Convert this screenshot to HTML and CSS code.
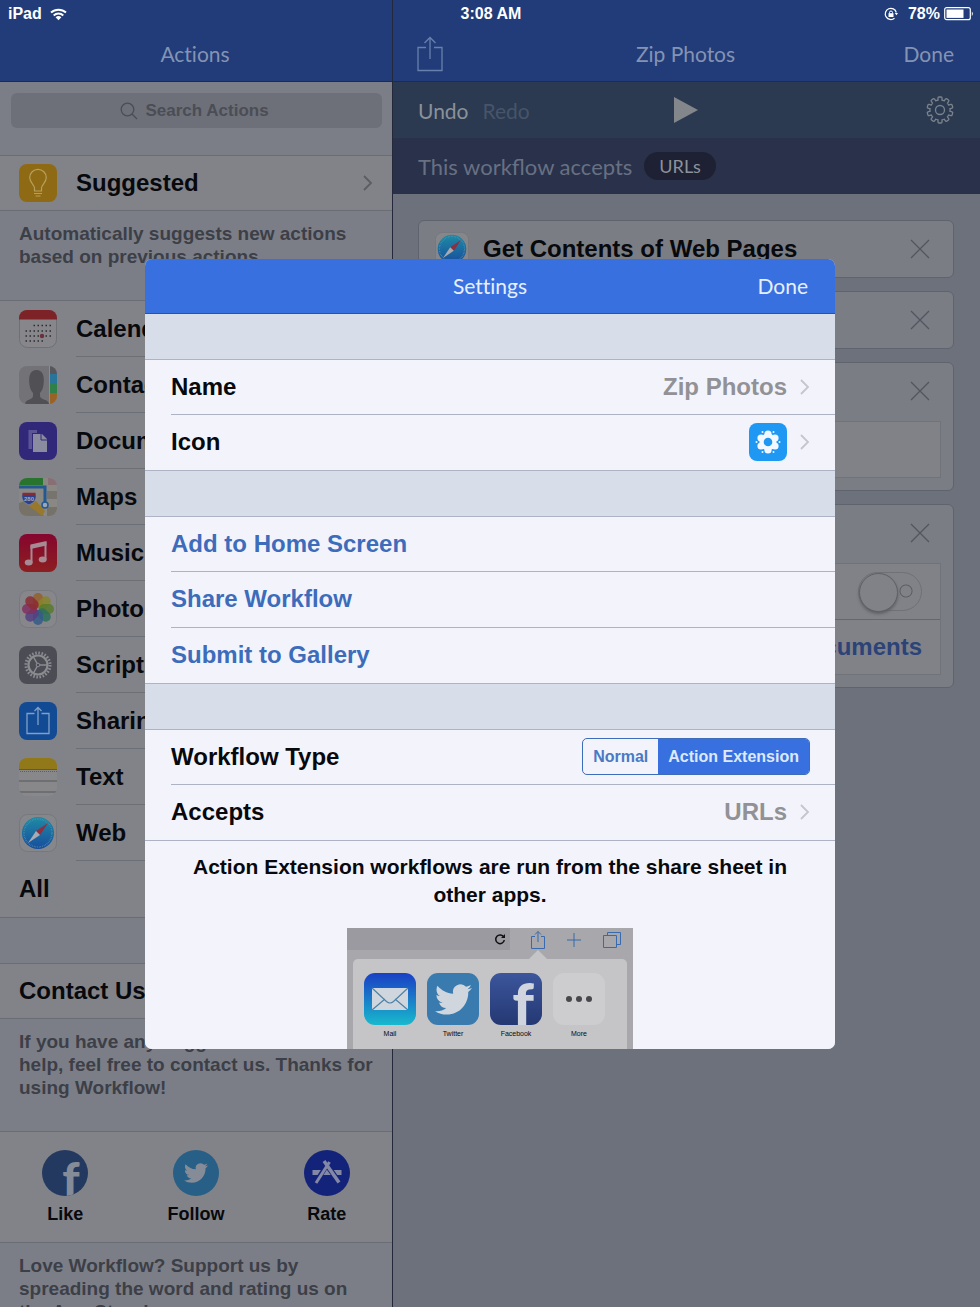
FILE: index.html
```html
<!DOCTYPE html>
<html lang="en">
<head>
    <meta charset="UTF-8">
    <meta name="viewport" content="width=device-width, initial-scale=1.0">
    <title>Workflow</title>
    <link rel="stylesheet" href="styles.css">
</head>
<body>
    <!-- Shared icon shapes -->
    <svg class="defs" width="0" height="0" aria-hidden="true">
        <defs>
            <linearGradient id="safariBlue" x1="0" y1="0" x2="0" y2="1">
                <stop offset="0" stop-color="#1f8ba5"/><stop offset="1" stop-color="#174d9c"/>
            </linearGradient>
            <linearGradient id="musicRed" x1="0" y1="0" x2="0" y2="1">
                <stop offset="0" stop-color="#85062f"/><stop offset="1" stop-color="#8c1f20"/>
            </linearGradient>
            <linearGradient id="mailBlue" x1="0" y1="0" x2="0" y2="1">
                <stop offset="0" stop-color="#1a3fc4"/><stop offset="1" stop-color="#18b9cd"/>
            </linearGradient>
            <linearGradient id="fbBlue" x1="0" y1="0" x2="0" y2="1">
                <stop offset="0" stop-color="#3c569c"/><stop offset="1" stop-color="#243873"/>
            </linearGradient>
            <clipPath id="tile"><rect width="38" height="38" rx="8"/></clipPath>
            <symbol id="bird" viewBox="0 0 24 24">
                <path d="M23.953 4.57a10 10 0 01-2.825.775 4.958 4.958 0 002.163-2.723c-.951.555-2.005.959-3.127 1.184a4.92 4.92 0 00-8.384 4.482C7.69 8.095 4.067 6.13 1.64 3.162a4.822 4.822 0 00-.666 2.475c0 1.71.87 3.213 2.188 4.096a4.904 4.904 0 01-2.228-.616v.06a4.923 4.923 0 003.946 4.827 4.996 4.996 0 01-2.212.085 4.936 4.936 0 004.604 3.417 9.867 9.867 0 01-6.102 2.105c-.39 0-.779-.023-1.17-.067a13.995 13.995 0 007.557 2.209c9.053 0 13.998-7.496 13.998-13.985 0-.21 0-.42-.015-.63A9.935 9.935 0 0024 4.59z"/>
            </symbol>
            <symbol id="chevron" viewBox="0 0 10 18">
                <path d="M1 2l7 7-7 7" fill="none" stroke="currentColor" stroke-width="1.800"/>
            </symbol>
            <symbol id="cross" viewBox="0 0 20 20">
                <path d="M1 1l18 18M19 1L1 19" fill="none" stroke="currentColor" stroke-width="1.3"/>
            </symbol>
            <symbol id="safari" viewBox="0 0 38 38">
                <rect x=".5" y=".5" width="37" height="37" rx="8" fill="#86878b" stroke="#77787d"/>
                <circle cx="19" cy="19" r="16" fill="url(#safariBlue)"/>
                <circle cx="19" cy="19" r="14" fill="none" stroke="#5f9cb5" stroke-width="1.4" stroke-dasharray=".5 1.2"/>
                <path d="M29 9L17 17l4 4z" fill="#8c3040"/>
                <path d="M9 29l8-12 4 4z" fill="#a9abb0"/>
            </symbol>
        </defs>
    </svg>

    <div class="status-bar">
        <div class="status-left">
            <span>iPad</span>
            <svg width="17" height="13" viewBox="0 0 17 13" fill="none" stroke="#fff" stroke-width="2">
                <path d="M1 4.6a11 11 0 0115 0M3.7 7.4a7 7 0 019.6 0"/>
                <path d="M5.6 9.2a4.3 4.3 0 015.8 0L8.500 12.200z" fill="#fff" stroke="none"/>
            </svg>
        </div>
        <div class="status-time">3:08 AM</div>
        <div class="status-right">
            <svg class="lock" width="14" height="14" viewBox="0 0 14 14" fill="none" stroke="#fff">
                <path d="M12.300 5.500A5.600 5.600 0 1010.500 11.200" stroke-width="1.2"/>
                <path d="M10.700 6l1.800 2.200L14 6z" fill="#fff" stroke="none"/>
                <rect x="4.500" y="6.200" width="5" height="3.800" fill="#fff" stroke="none"/>
                <path d="M5.500 6.500V5.500a1.500 1.500 0 013 0v1"/>
            </svg>
            <span>78%</span>
            <svg width="30" height="14" viewBox="0 0 30 14">
                <rect x=".7" y=".7" width="25.600" height="12" rx="2" fill="none" stroke="#fff" stroke-width="1.2"/>
                <rect x="2.500" y="2.500" width="17" height="8.400" fill="#fff"/>
                <path d="M27.800 4.500a3 3 0 010 4.500z" fill="#fff"/>
            </svg>
        </div>
    </div>

    <div class="panes">
        <section class="actions">
            <header class="nav nav-center">
                <h1>Actions</h1>
            </header>
            <div class="search-bar">
                <label class="search">
                    <svg width="18" height="18" viewBox="0 0 18 18" fill="none" stroke="#4b4d55" stroke-width="1.3">
                        <circle cx="7.500" cy="7.500" r="6.300"/><path d="M12 12l5 5"/>
                    </svg>
                    <input type="text" placeholder="Search Actions" aria-label="Search Actions">
                </label>
            </div>

            <ul class="list">
                <li class="row">
                    <svg class="tile" viewBox="0 0 38 38">
                        <rect width="38" height="38" rx="8" fill="#8f6a14"/>
                        <g fill="none" stroke="#b5a05c" stroke-width="1.2">
                            <path d="M15.500 27v-3c0-3-4.800-5.500-4.800-10.400a8.300 8.300 0 0116.600 0c0 4.900-4.800 7.400-4.800 10.400v3z"/>
                            <path d="M15 29.500h8M16.500 32h5"/>
                        </g>
                    </svg>
                    <span>Suggested</span>
                    <svg class="chevron" width="10" height="18"><use href="#chevron"/></svg>
                </li>
            </ul>
            <p class="note">Automatically suggests new actions based on previous actions.</p>

            <ul class="list inset">
                <li class="row">
                    <svg class="tile" viewBox="0 0 38 38">
                        <rect x=".5" y=".5" width="37" height="37" rx="8" fill="#86868b" stroke="#6f7076"/>
                        <path d="M0 9.500V8a8 8 0 018-8h22a8 8 0 018 8v1.500z" fill="#7d2328"/>
                        <g stroke="#2b2b31" stroke-width="1.5" stroke-dasharray="1.500 2.500">
                            <path d="M14.500 15.500h18M6.500 21h26M6.500 26h26M6.500 31h18"/>
                        </g>
                        <circle cx="23" cy="26" r="2.200" fill="#6d3039"/>
                    </svg>
                    <span>Calendar</span>
                </li>
                <li class="row">
                    <svg class="tile" viewBox="0 0 38 38">
                        <g clip-path="url(#tile)">
                            <rect width="38" height="38" fill="#737377"/>
                            <path d="M6 38c0-5 8-4 8-8v-3c-2-2-3-5-3.500-8C9 9 12 4 17.500 4S26 9 24.500 19c-.5 3-1.500 6-3.500 8v3c0 4 9 3 9 8z" fill="#515155"/>
                            <rect x="30" width="8" height="38" fill="#8d8d90"/>
                            <rect x="31" width="7" height="8" fill="#56575d"/>
                            <rect x="31" y="8" width="7" height="10" fill="#28749b"/>
                            <rect x="31" y="18" width="7" height="9" fill="#2f8149"/>
                            <rect x="31" y="27" width="7" height="11" fill="#9a6224"/>
                        </g>
                    </svg>
                    <span>Contacts</span>
                </li>
                <li class="row">
                    <svg class="tile" viewBox="0 0 38 38">
                        <rect width="38" height="38" rx="8" fill="#32287a"/>
                        <path d="M9.500 8H18v3h-5v16H9.500z" fill="#5b5595"/>
                        <path d="M14 12h9l5 5v13H14z" fill="#8b8ba0"/>
                        <path d="M22 12v6h6" fill="none" stroke="#32287a"/>
                    </svg>
                    <span>Documents</span>
                </li>
                <li class="row">
                    <svg class="tile" viewBox="0 0 38 38">
                        <g clip-path="url(#tile)">
                            <rect width="38" height="38" fill="#8a8882"/>
                            <rect width="24" height="7" fill="#28742f"/>
                            <rect x="29" width="9" height="7" fill="#886f76"/>
                            <rect x="28" y="13" width="10" height="8" fill="#77736e"/>
                            <path d="M0 38V25l12-4 13 17z" fill="#777267"/>
                            <path d="M10 28l7-5 9 10-3 5z" fill="#97782c"/>
                            <path d="M28 29h10v9H28z" fill="#767269"/>
                            <path d="M0 9h26v17" fill="none" stroke="#235891" stroke-width="3"/>
                            <circle cx="26" cy="27" r="3" fill="#9aa6b5" stroke="#235891" stroke-width="1.5"/>
                            <path d="M3 16c2-2 4 0 7-1 3 1 5-1 7 1 1 7-3 9-7 11-4-2-8-4-7-11z" fill="#29428b" stroke="#8b8b9a" stroke-width=".8"/>
                            <path d="M3.500 16h13" stroke="#832c38" stroke-width="2.500"/>
                            <text x="10" y="23" class="shield">280</text>
                        </g>
                    </svg>
                    <span>Maps</span>
                </li>
                <li class="row">
                    <svg class="tile" viewBox="0 0 38 38">
                        <rect width="38" height="38" rx="8" fill="url(#musicRed)"/>
                        <path d="M11.500 10.500L27.500 7v4.500l-16 3.500z" fill="#a68a94"/>
                        <path d="M12.500 11v17M26.500 8v17" stroke="#a68a94" stroke-width="2"/>
                        <ellipse cx="9.700" cy="28.500" rx="4" ry="3" fill="#a68a94"/>
                        <ellipse cx="23.700" cy="25.500" rx="4" ry="3" fill="#a68a94"/>
                    </svg>
                    <span>Music</span>
                </li>
                <li class="row">
                    <svg class="tile" viewBox="0 0 38 38">
                        <rect x=".5" y=".5" width="37" height="37" rx="8" fill="#86868b" stroke="#78797e"/>
                        <g fill-opacity=".85">
                            <rect x="14" y="3" width="10" height="15" rx="5" fill="#93602a"/>
                            <rect x="14" y="3" width="10" height="15" rx="5" fill="#87842a" transform="rotate(45 19 19)"/>
                            <rect x="14" y="3" width="10" height="15" rx="5" fill="#587a2c" transform="rotate(90 19 19)"/>
                            <rect x="14" y="3" width="10" height="15" rx="5" fill="#2b715c" transform="rotate(135 19 19)"/>
                            <rect x="14" y="3" width="10" height="15" rx="5" fill="#345a88" transform="rotate(180 19 19)"/>
                            <rect x="14" y="3" width="10" height="15" rx="5" fill="#554080" transform="rotate(225 19 19)"/>
                            <rect x="14" y="3" width="10" height="15" rx="5" fill="#802f60" transform="rotate(270 19 19)"/>
                            <rect x="14" y="3" width="10" height="15" rx="5" fill="#8c2b32" transform="rotate(315 19 19)"/>
                        </g>
                    </svg>
                    <span>Photos</span>
                </li>
                <li class="row">
                    <svg class="tile" viewBox="0 0 38 38">
                        <rect width="38" height="38" rx="8" fill="#4c4c54"/>
                        <g fill="none" stroke="#8b8c91">
                            <circle cx="19" cy="19" r="12" stroke-width="3" stroke-dasharray="1.570 1.570"/>
                            <circle cx="19" cy="19" r="9.500" stroke-width="2.200"/>
                            <path d="M19 19l9 0M19 19l-4.500-8M19 19l-4.500 8" stroke-width="1.500"/>
                            <circle cx="19" cy="19" r="1.800" fill="#4c4c54"/>
                        </g>
                    </svg>
                    <span>Scripting</span>
                </li>
                <li class="row">
                    <svg class="tile" viewBox="0 0 38 38">
                        <rect width="38" height="38" rx="8" fill="#124a94"/>
                        <path d="M15.500 11.500H8v20h22v-20h-7.500M19 23V6M15.500 9L19 5.500 22.500 9" fill="none" stroke="#7fa0c8" stroke-width="1.300"/>
                    </svg>
                    <span>Sharing</span>
                </li>
                <li class="row">
                    <svg class="tile" viewBox="0 0 38 38">
                        <g clip-path="url(#tile)">
                            <rect width="38" height="38" fill="#88888b"/>
                            <rect width="38" height="11" fill="#917818"/>
                            <path d="M0 11.500h38" stroke="#65583a"/>
                            <path d="M1 13.500h37" stroke="#5f5f62" stroke-dasharray="1 1"/>
                            <path d="M0 23h38M0 34h38" stroke="#66676b" stroke-width="1.500"/>
                        </g>
                    </svg>
                    <span>Text</span>
                </li>
                <li class="row">
                    <svg class="tile"><use href="#safari"/></svg>
                    <span>Web</span>
                </li>
                <li class="row"><span>All</span></li>
            </ul>

            <ul class="list spaced">
                <li class="row"><span>Contact Us</span></li>
            </ul>
            <p class="note">If you have any suggestions or need help, feel free to contact us. Thanks for using Workflow!</p>

            <div class="social">
                <button type="button">
                    <svg width="46" height="46" viewBox="0 0 46 46">
                        <clipPath id="round"><circle cx="23" cy="23" r="23"/></clipPath>
                        <g clip-path="url(#round)">
                            <rect width="46" height="46" fill="#233960"/>
                            <text x="29" y="47" class="fb">f</text>
                        </g>
                    </svg>
                    Like
                </button>
                <button type="button">
                    <svg width="46" height="46" viewBox="0 0 46 46">
                        <circle cx="23" cy="23" r="23" fill="#275f86"/>
                        <use href="#bird" x="11" y="11" width="24" height="24" fill="#868c97"/>
                    </svg>
                    Follow
                </button>
                <button type="button">
                    <svg width="46" height="46" viewBox="0 0 46 46">
                        <circle cx="23" cy="23" r="23" fill="#14237a"/>
                        <g stroke="#8288a5" fill="none">
                            <path d="M8.500 22.500h29" stroke-width="5"/>
                            <path d="M25.500 11L12 32" stroke="#14237a" stroke-width="5"/>
                            <path d="M20 11l15 21" stroke="#14237a" stroke-width="5.500"/>
                            <path d="M25.500 12L12 33" stroke-width="3"/>
                            <path d="M20 11l15 21.500" stroke-width="3.500"/>
                        </g>
                    </svg>
                    Rate
                </button>
            </div>
            <p class="note">Love Workflow? Support us by spreading the word and rating us on the App Store!</p>
        </section>

        <section class="editor">
            <header class="nav">
                <button type="button" class="nav-button" aria-label="Share">
                    <svg width="26" height="36" viewBox="0 0 26 36" fill="none" stroke="#6880ad" stroke-width="1.300">
                        <path d="M9 11.500H1v23h24v-23h-8M13 23V1.500M7.500 7L13 1.500 18.500 7"/>
                    </svg>
                </button>
                <h1>Zip Photos</h1>
                <button type="button" class="nav-button">Done</button>
            </header>
            <div class="toolbar">
                <div class="history">
                    <button type="button">Undo</button>
                    <button type="button" class="off">Redo</button>
                </div>
                <button type="button" aria-label="Run">
                    <svg width="24" height="28" viewBox="0 0 24 28"><path d="M0 1l24 13L0 27z" fill="#83868b"/></svg>
                </button>
                <button type="button" class="gear" aria-label="Settings">
                    <svg width="28" height="28" viewBox="0 0 28 28" fill="#2b3a50" stroke="#7b828d" stroke-width="1.300">
                        <circle cx="14" cy="14" r="10"/>
                        <rect x="12" y="1" width="4" height="6" rx="1"/>
                        <rect x="12" y="1" width="4" height="6" rx="1" transform="rotate(36 14 14)"/>
                        <rect x="12" y="1" width="4" height="6" rx="1" transform="rotate(72 14 14)"/>
                        <rect x="12" y="1" width="4" height="6" rx="1" transform="rotate(108 14 14)"/>
                        <rect x="12" y="1" width="4" height="6" rx="1" transform="rotate(144 14 14)"/>
                        <rect x="12" y="1" width="4" height="6" rx="1" transform="rotate(180 14 14)"/>
                        <rect x="12" y="1" width="4" height="6" rx="1" transform="rotate(216 14 14)"/>
                        <rect x="12" y="1" width="4" height="6" rx="1" transform="rotate(252 14 14)"/>
                        <rect x="12" y="1" width="4" height="6" rx="1" transform="rotate(288 14 14)"/>
                        <rect x="12" y="1" width="4" height="6" rx="1" transform="rotate(324 14 14)"/>
                        <circle cx="14" cy="14" r="9.400" stroke="none"/>
                        <circle cx="14" cy="14" r="4.500"/>
                    </svg>
                </button>
            </div>
            <div class="accepts">
                <span>This workflow accepts</span>
                <button type="button" class="pill">URLs</button>
            </div>
            <div class="canvas">
                <article class="card">
                    <div class="card-head">
                        <svg width="34" height="34"><use href="#safari"/></svg>
                        <h2>Get Contents of Web Pages</h2>
                        <button type="button" aria-label="Remove"><svg width="20" height="20"><use href="#cross"/></svg></button>
                    </div>
                </article>
                <article class="card">
                    <div class="card-head">
                        <button type="button" aria-label="Remove"><svg width="20" height="20"><use href="#cross"/></svg></button>
                    </div>
                </article>
                <article class="card">
                    <div class="card-head">
                        <button type="button" aria-label="Remove"><svg width="20" height="20"><use href="#cross"/></svg></button>
                    </div>
                    <div class="fields"><div class="field"></div></div>
                </article>
                <article class="card">
                    <div class="card-head">
                        <button type="button" aria-label="Remove"><svg width="20" height="20"><use href="#cross"/></svg></button>
                    </div>
                    <div class="fields">
                        <div class="field"><input type="checkbox" class="switch" role="switch" aria-label="Ask"></div>
                        <div class="field value">Documents</div>
                    </div>
                </article>
            </div>
        </section>
    </div>

    <div class="overlay">
        <div class="settings" role="dialog" aria-label="Settings">
            <header class="settings-nav">
                <h1>Settings</h1>
                <button type="button">Done</button>
            </header>
            <ul class="group">
                <li>
                    <span>Name</span>
                    <span class="detail">Zip Photos</span>
                    <svg class="chevron" width="10" height="18"><use href="#chevron"/></svg>
                </li>
                <li>
                    <span>Icon</span>
                    <svg class="tile detail" viewBox="0 0 38 38">
                        <rect width="38" height="38" rx="8" fill="#1f98f3"/>
                        <g fill="#f3f8ff">
                            <circle cx="19" cy="19" r="8.500"/>
                            <circle cx="19" cy="11" r="3.600"/><circle cx="19" cy="27" r="3.600"/>
                            <circle cx="12" cy="15" r="3.600"/><circle cx="26" cy="15" r="3.600"/>
                            <circle cx="12" cy="23" r="3.600"/><circle cx="26" cy="23" r="3.600"/>
                            <circle cx="7.500" cy="19" r="1"/><circle cx="30.500" cy="19" r="1"/>
                            <circle cx="13.500" cy="9" r="1"/><circle cx="24.500" cy="9" r="1"/>
                            <circle cx="13.500" cy="29" r="1"/><circle cx="24.500" cy="29" r="1"/>
                        </g>
                        <circle cx="19" cy="19" r="4.300" fill="#1f98f3"/>
                    </svg>
                    <svg class="chevron" width="10" height="18"><use href="#chevron"/></svg>
                </li>
            </ul>
            <ul class="group">
                <li><a href="#">Add to Home Screen</a></li>
                <li><a href="#">Share Workflow</a></li>
                <li><a href="#">Submit to Gallery</a></li>
            </ul>
            <ul class="group">
                <li>
                    <span>Workflow Type</span>
                    <div class="segmented detail">
                        <input type="radio" name="type" id="normal">
                        <label for="normal">Normal</label>
                        <input type="radio" name="type" id="extension" checked>
                        <label for="extension">Action Extension</label>
                    </div>
                </li>
                <li>
                    <span>Accepts</span>
                    <span class="detail">URLs</span>
                    <svg class="chevron" width="10" height="18"><use href="#chevron"/></svg>
                </li>
            </ul>
            <div class="about">
                <p>Action Extension workflows are run from the share sheet in other apps.</p>
                <div class="preview">
                    <div class="preview-bar">
                        <div class="address">
                            <svg width="12" height="12" viewBox="0 0 12 12"><path d="M9.800 4.200A4.300 4.300 0 1010.300 7" fill="none" stroke="#111" stroke-width="1.500"/><path d="M7 5h4V1z" fill="#111"/></svg>
                        </div>
                        <svg width="16" height="20" viewBox="0 0 16 20"><path d="M5 6.500H1.500v12h13v-12H11M8 12V1.500M5 4.500l3-3 3 3"/></svg>
                        <svg width="16" height="20" viewBox="0 0 16 20"><path d="M8 3v14M1 10h14"/></svg>
                        <svg width="20" height="20" viewBox="0 0 20 20"><path d="M1.500 5.500h13v12h-13zM5.500 5V2.500h13v12H15"/></svg>
                    </div>
                    <div class="sheet">
                        <div class="app">
                            <svg viewBox="0 0 52 52">
                                <rect width="52" height="52" rx="11" fill="url(#mailBlue)"/>
                                <rect x="8" y="15" width="36" height="22" rx="1" fill="#d0d6dd"/>
                                <path d="M8 15l14.500 13.500q3.500 3 7 0L44 15M8 37l13-11M44 37L31 26" fill="none" stroke="#4d83a8" stroke-width="1.200"/>
                            </svg>
                            Mail
                        </div>
                        <div class="app">
                            <svg viewBox="0 0 52 52">
                                <rect width="52" height="52" rx="11" fill="#397bae"/>
                                <use href="#bird" x="8" y="8" width="37" height="37" fill="#d0d6dd"/>
                            </svg>
                            Twitter
                        </div>
                        <div class="app">
                            <svg viewBox="0 0 52 52">
                                <clipPath id="appTile"><rect width="52" height="52" rx="11"/></clipPath>
                                <g clip-path="url(#appTile)">
                                    <rect width="52" height="52" fill="url(#fbBlue)"/>
                                    <text x="33" y="54" class="fb big">f</text>
                                </g>
                            </svg>
                            Facebook
                        </div>
                        <div class="app">
                            <svg viewBox="0 0 52 52">
                                <rect width="52" height="52" rx="11" fill="#cdcdcf"/>
                                <g fill="#48484c"><circle cx="16" cy="26" r="3"/><circle cx="26" cy="26" r="3"/><circle cx="36" cy="26" r="3"/></g>
                            </svg>
                            More
                        </div>
                    </div>
                </div>
            </div>
        </div>
    </div>
</body>
</html>
```
FILE: styles.css
```css
* {
    margin: 0;
    padding: 0;
    box-sizing: border-box;
}

body {
    font-family: "Liberation Sans", Arial, sans-serif;
    font-weight: bold;
    height: 100vh;
    overflow: hidden;
    background: #6d717c;
    color: #08090d;
}

ul {
    list-style: none;
}

button {
    background: none;
    border: none;
    font: inherit;
    color: inherit;
    cursor: pointer;
}

svg {
    display: block;
    flex-shrink: 0;
}

.defs {
    position: absolute;
}

/* Status bar */
.status-bar {
    position: absolute;
    top: 0;
    left: 0;
    right: 0;
    height: 28px;
    padding: 0 6px 0 8px;
    display: grid;
    grid-template-columns: 1fr auto 1fr;
    align-items: center;
    color: #fff;
    font-size: 16px;
}

.status-left, .status-right {
    display: flex;
    align-items: center;
    gap: 8px;
}

.status-right {
    justify-content: flex-end;
    gap: 4px;
}

.status-right .lock {
    margin-right: 6px;
}

/* Columns */
.panes {
    display: grid;
    grid-template-columns: 40% 1fr;
    height: 100%;
}

.actions {
    background: #7b7e87;
    overflow: hidden;
}

.editor {
    border-left: 1px solid #23293a;
    overflow: hidden;
}

.nav {
    height: 82px;
    padding: 26px 26px 0 24px;
    display: grid;
    grid-template-columns: 1fr auto 1fr;
    align-items: center;
    background: #213c78;
    border-bottom: 1px solid #182c55;
    color: #8593b3;
    font-family: Lato, sans-serif;
    font-size: 21px;
    font-variant-ligatures: none;
}

.nav-center {
    grid-template-columns: 1fr;
    text-align: center;
}

.nav h1, .settings-nav h1 {
    font-size: 21px;
    font-weight: 400;
}

.nav-button {
    font-weight: 400;
    justify-self: start;
}

.nav-button:last-child {
    justify-self: end;
}

/* Actions list */
.search-bar {
    padding: 11px 10px 27px 11px;
}

.search {
    height: 35px;
    display: flex;
    justify-content: center;
    align-items: center;
    gap: 8px;
    border-radius: 6px;
    background: #6d7079;
}

.search input {
    width: 128px;
    border: none;
    outline: none;
    background: none;
    font: bold 17px "Liberation Sans", Arial, sans-serif;
}

.search input::placeholder {
    color: #4b4d55;
    opacity: 1;
}

.list {
    background: #828388;
    border-top: 1px solid #6a6d76;
    border-bottom: 1px solid #6a6d76;
}

.spaced {
    margin-top: 45px;
}

.row {
    height: 54px;
    padding: 0 19px;
    display: flex;
    align-items: center;
    gap: 19px;
    font-size: 24px;
}

.inset .row {
    height: 56px;
    position: relative;
}

.inset .row:not(:last-child)::after {
    content: "";
    position: absolute;
    left: 76px;
    right: 0;
    bottom: 0;
    border-bottom: 1px solid #6d6f76;
}

.tile {
    width: 38px;
    height: 38px;
}

.chevron {
    margin-left: auto;
    color: #5c5d64;
}

.note {
    padding: 11px 16px 32px 19px;
    font-size: 19px;
    line-height: 23px;
    color: #3d3f47;
}

.shield {
    font: bold 6px "Liberation Sans", Arial, sans-serif;
    fill: #a5a9bd;
    text-anchor: middle;
}

.fb {
    font: 900 48px Lato, sans-serif;
    fill: #858b97;
    text-anchor: middle;
}

.fb.big {
    font-size: 60px;
    fill: #d0d4de;
}

.social {
    height: 112px;
    display: grid;
    grid-template-columns: repeat(3, 1fr);
    background: #828388;
    border-top: 1px solid #6a6d76;
    border-bottom: 1px solid #6a6d76;
}

.social button {
    display: flex;
    flex-direction: column;
    align-items: center;
    justify-content: center;
    gap: 8px;
    font-size: 18px;
}

/* Workflow editor */
.toolbar, .accepts {
    height: 56px;
    padding: 0 26px 0 25px;
    font-family: Lato, sans-serif;
    font-weight: 400;
    font-size: 21px;
}

.toolbar {
    display: grid;
    grid-template-columns: 1fr auto 1fr;
    align-items: center;
    background: #2b3a50;
    color: #8b9199;
}

.history {
    display: flex;
    gap: 14px;
}

.history .off {
    color: #47546a;
}

.gear {
    justify-self: end;
}

.accepts {
    display: flex;
    align-items: center;
    gap: 12px;
    background: #29324a;
    color: #687083;
    font-size: 22px;
}

.pill {
    height: 28px;
    padding: 0 15px;
    border-radius: 14px;
    background: #1d2133;
    color: #8e929b;
    font-size: 18px;
}

.canvas {
    padding: 26px 26px 26px 25px;
    display: flex;
    flex-direction: column;
    gap: 13px;
}

.card {
    background: #7a7d84;
    border: 1px solid #5e636e;
    border-radius: 6px;
}

.card-head {
    height: 56px;
    padding: 0 23px 0 16px;
    display: flex;
    align-items: center;
    gap: 14px;
}

.card-head h2 {
    font-size: 24px;
}

.card-head button {
    margin-left: auto;
    color: #53565e;
}

.fields {
    margin: 2px 12px 12px;
    background: #818287;
    border: 1px solid #70737a;
}

.field {
    height: 55px;
    padding: 0 18px;
    display: flex;
    align-items: center;
    justify-content: flex-end;
}

.field + .field {
    border-top: 1px solid #64676f;
}

.field.value {
    font-size: 24px;
    color: #2b4377;
}

.switch {
    appearance: none;
    width: 64px;
    height: 39px;
    border: 1px solid #707177;
    border-radius: 20px;
    background:
        radial-gradient(circle at 47px 18px, transparent 5px, #5c5d64 6px, transparent 7px);
}

.switch::before {
    content: "";
    display: block;
    width: 37px;
    height: 37px;
    border: 1px solid #5f6067;
    border-radius: 50%;
    background: #818287;
    box-shadow: 0 2px 3px #5f6067;
}

/* Settings dialog */
.overlay {
    position: absolute;
    inset: 0;
    display: grid;
    place-items: center;
}

.settings {
    width: 100%;
    max-width: 690px;
    height: 790px;
    max-height: 100%;
    overflow: hidden;
    border-radius: 7px;
    background: #d8ddea;
}

.settings-nav {
    height: 55px;
    padding: 0 27px;
    display: grid;
    grid-template-columns: 1fr auto 1fr;
    align-items: center;
    background: #3870df;
    border-bottom: 1px solid #2853a8;
    color: #e6effd;
    font-family: Lato, sans-serif;
    font-weight: 400;
    font-size: 21px;
    font-variant-ligatures: none;
}

.settings-nav h1 {
    grid-column: 2;
}

.settings-nav button {
    justify-self: end;
}

.group {
    margin-top: 45px;
    padding-left: 26px;
    background: #f3f4fb;
    border-top: 1px solid #adb2c4;
    border-bottom: 1px solid #adb2c4;
}

.group li {
    height: 56px;
    padding-right: 25px;
    display: flex;
    align-items: center;
    gap: 13px;
    font-size: 24px;
}

.group li:not(:last-child) {
    border-bottom: 1px solid #adb2c4;
}

.group li:first-child, .group li:last-child {
    height: 55px;
}

.group a {
    color: #3d6cbb;
    text-decoration: none;
}

.group .detail {
    margin-left: auto;
    color: #919196;
}

.group .chevron {
    margin-left: 0;
    color: #c5c6cc;
}

.group .segmented {
    display: flex;
    height: 37px;
    overflow: hidden;
    border: 1px solid #3d6cbb;
    border-radius: 5px;
    font-size: 16px;
}

.segmented input {
    position: absolute;
    opacity: 0;
}

.segmented label {
    padding: 0 10px;
    display: flex;
    align-items: center;
    color: #4a79c4;
}

.segmented input:checked + label {
    background: #3870df;
    color: #dde9fb;
}

.about {
    padding: 12px 40px 0;
    background: #f3f4fb;
    font-size: 21px;
    line-height: 28px;
    text-align: center;
}

.preview {
    width: 286px;
    margin: 19px auto 0;
    padding-bottom: 12px;
    background: #a8a8ac;
}

.preview-bar {
    height: 31px;
    padding-right: 11px;
    display: flex;
    align-items: flex-start;
    gap: 20px;
    fill: none;
    stroke: #376aae;
}

.preview-bar > svg {
    margin-top: 2px;
}

.address {
    flex: 1;
    height: 22px;
    padding-right: 4px;
    display: flex;
    align-items: center;
    justify-content: flex-end;
    background: #9b9aa0;
}

.address svg {
    stroke: none;
}

.sheet {
    position: relative;
    height: 130px;
    margin: 0 6px;
    padding: 14px 11px;
    display: flex;
    gap: 11px;
    border-radius: 5px;
    background: #c5c5c7;
}

/* Pointer towards the share button */
.sheet::before {
    content: "";
    position: absolute;
    top: -9px;
    left: 176px;
    border: 9px solid transparent;
    border-top: none;
    border-bottom-color: #c5c5c7;
}

.app {
    width: 52px;
    font-size: 7px;
    font-weight: 400;
    line-height: 18px;
}
```
